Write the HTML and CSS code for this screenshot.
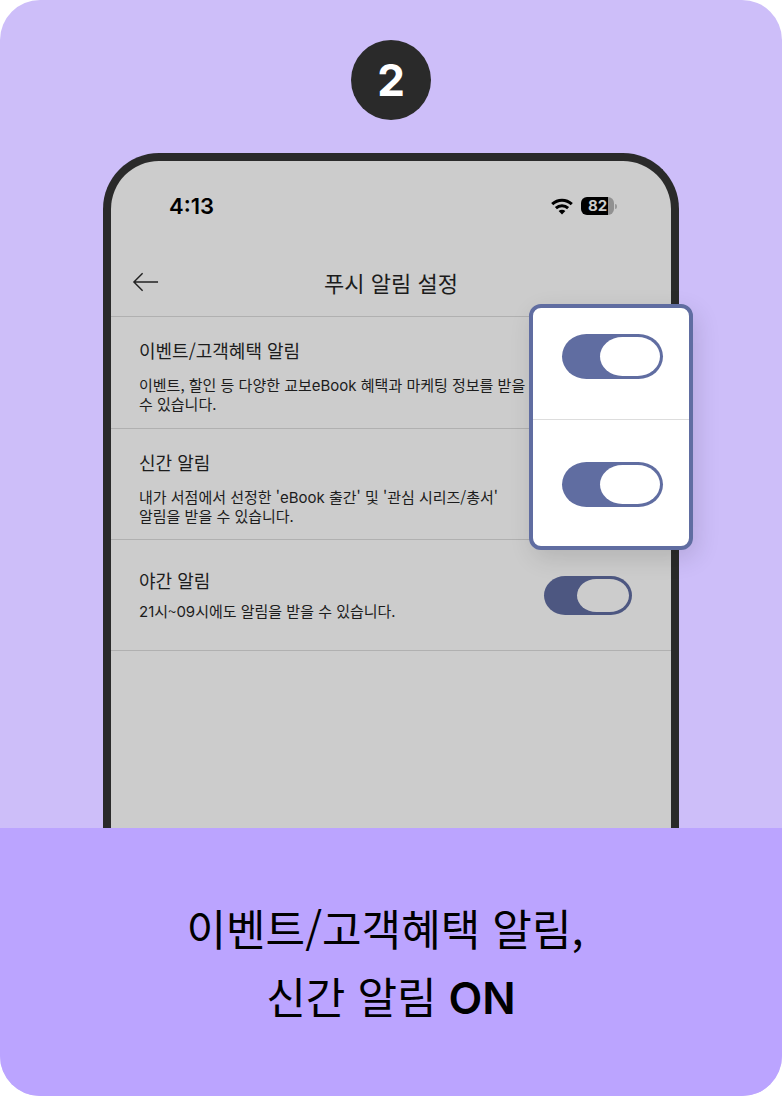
FILE: index.html
```html
<!DOCTYPE html>
<html lang="ko">
<head>
<meta charset="utf-8">
<meta name="viewport" content="width=device-width, initial-scale=1">
<title>푸시 알림 설정</title>
<link rel="stylesheet" href="styles.css">
</head>
<body>
<main class="step">
  <section class="hero">
    <div class="badge">2</div>
    <div class="phone">
      <div class="status">
        <span class="time">4:13</span>
        <span class="indicators">
          <svg class="wifi" width="22" height="17" viewBox="0 0 22 17" aria-hidden="true">
            <g fill="none" stroke="#000" stroke-width="3">
              <path d="M1.2 6.2C6.8.8 15.2.8 20.8 6.2"/>
              <path d="M4.9 10.1c3.5-3.3 8.7-3.3 12.2 0"/>
            </g>
            <path d="M7.6 13c2-1.8 4.8-1.8 6.8 0L11 16.6z"/>
          </svg>
          <span class="battery"><span class="level">82</span></span>
        </span>
      </div>
      <header class="bar">
        <button class="back" type="button" aria-label="뒤로">
          <svg width="28" height="20" viewBox="0 0 28 20" fill="none" stroke="#222" stroke-width="1.5" aria-hidden="true"><path d="M27 10H2M11 1 2 10l9 9"/></svg>
        </button>
        <h1 class="title">푸시 알림 설정</h1>
      </header>
      <div class="row">
        <div class="text">
          <h2 class="name">이벤트/고객혜택 알림</h2>
          <p class="desc">이벤트, 할인 등 다양한 교보<span class="latin">eBook</span> 혜택과 마케팅 정보를 받을<br>수 있습니다.</p>
        </div>
      </div>
      <div class="row">
        <div class="text">
          <h2 class="name">신간 알림</h2>
          <p class="desc">내가 서점에서 선정한 '<span class="latin">eBook</span> 출간' 및 '관심 시리즈/총서'<br>알림을 받을 수 있습니다.</p>
        </div>
      </div>
      <div class="row">
        <div class="single">
          <h2 class="name"><label for="night">야간 알림</label></h2>
          <p class="desc near"><span class="latin">21</span>시~<span class="latin">09</span>시에도 알림을 받을 수 있습니다.</p>
        </div>
        <input class="toggle dim" id="night" type="checkbox" checked>
      </div>
      <div class="callout">
        <div class="cell"><input class="toggle" type="checkbox" aria-label="이벤트/고객혜택 알림" checked></div>
        <div class="cell tall"><input class="toggle" type="checkbox" aria-label="신간 알림" checked></div>
      </div>
    </div>
  </section>
  <p class="caption">이벤트/고객혜택 알림,&nbsp;<br>신간 알림 <strong class="on">ON</strong></p>
</main>
</body>
</html>
```
FILE: styles.css
```css
* { box-sizing: border-box; }

body {
  margin: 0;
  background: #fff;
  color: #000;
  font-family: "Noto Sans CJK KR", sans-serif;
}

h1, h2, p { margin: 0; font-weight: 400; }

.step {
  display: flex;
  flex-direction: column;
  min-height: 100vh;
  border-radius: 40px;
  overflow: hidden;
  background: #cdbef9;
}

.hero {
  flex: 1;
  display: flex;
  flex-direction: column;
  align-items: center;
  gap: 33px;
  padding: 40px 24px 0;
}

.badge {
  display: grid;
  place-items: center;
  width: 80px;
  height: 80px;
  border-radius: 50%;
  background: #2a2a2a;
  color: #fff;
  font: 700 44px/1 Inter, sans-serif;
}

.phone {
  position: relative;
  flex: 1;
  width: 100%;
  max-width: 576px;
  border: 8px solid #2a2a2a;
  border-bottom: 0;
  border-radius: 56px 56px 0 0;
  background: #ccc;
  color: #1c1c1c;
}

.status {
  display: flex;
  justify-content: space-between;
  align-items: center;
  height: 90px;
  padding: 0 54px 0 58px;
}

.time { font: 600 22px/24px Inter, sans-serif; color: #000; }

.indicators { display: flex; align-items: center; gap: 8px; }

.battery {
  position: relative;
  display: flex;
  width: 33px;
  height: 18px;
  margin-right: 3px;
  border-radius: 6px;
  background: linear-gradient(90deg, #000 82%, #919191 82%);
}

.battery::after {
  content: "";
  position: absolute;
  top: 7px;
  right: -3px;
  width: 2px;
  height: 5px;
  border-radius: 0 3px 3px 0;
  background: #999;
}

.level {
  flex: 1;
  text-align: center;
  color: #ccc;
  font: 700 15px/18px Inter, sans-serif;
}

.bar {
  display: grid;
  grid-template-columns: 48px 1fr 48px;
  align-items: center;
  height: 66px;
  padding-bottom: 4px;
  border-bottom: 1px solid #b0b0b0;
}

.back {
  display: flex;
  padding: 0 0 0 21px;
  border: 0;
  background: none;
}

.title { text-align: center; font-size: 22px; line-height: 32px; }

.row {
  display: flex;
  justify-content: space-between;
  align-items: center;
  min-height: 111px;
  padding: 0 39px 0 28px;
  border-bottom: 1px solid #b0b0b0;
}

.bar + .row { min-height: 112px; }

.name { font-size: 18px; line-height: 28px; }

.desc { margin-top: 12px; font-size: 15px; line-height: 18px; white-space: nowrap; }

.near { margin-top: 8px; }

.text { padding-top: 4px; }

.single { padding-bottom: 4px; }

.latin { font-family: Inter, sans-serif; }

.toggle {
  appearance: none;
  display: flex;
  flex: none;
  justify-content: flex-end;
  width: 101px;
  height: 45px;
  margin: 0;
  padding: 3px;
  border-radius: 25px / 23px;
  background: #606da1;
}

.toggle::before {
  content: "";
  width: 60px;
  border-radius: 23px / 20px;
  background: #fff;
}

.toggle:not(:checked) { justify-content: flex-start; background: #999; }

.dim { width: 88px; height: 39px; background: #4d5781; }

.dim::before { width: 52px; border-radius: 20px / 17px; background: #ccc; }

.callout {
  position: absolute;
  top: 143px;
  right: -22px;
  width: 164px;
  border: 4px solid #606da1;
  border-radius: 12px;
  background: #fff;
  box-shadow: 4px 8px 24px rgba(0, 0, 0, 0.12);
}

.cell {
  display: flex;
  justify-content: center;
  padding: 26px 0 40px 2px;
}

.tall { padding: 42px 0 39px 2px; border-top: 1px solid #ddd; }

.caption {
  padding: 65px 24px 67px;
  background: #bba4ff;
  text-align: center;
  font-size: 43px;
  line-height: 68px;
}

.on { font-family: Inter, sans-serif; font-size: 44px; font-weight: 600; line-height: 1; }
```
